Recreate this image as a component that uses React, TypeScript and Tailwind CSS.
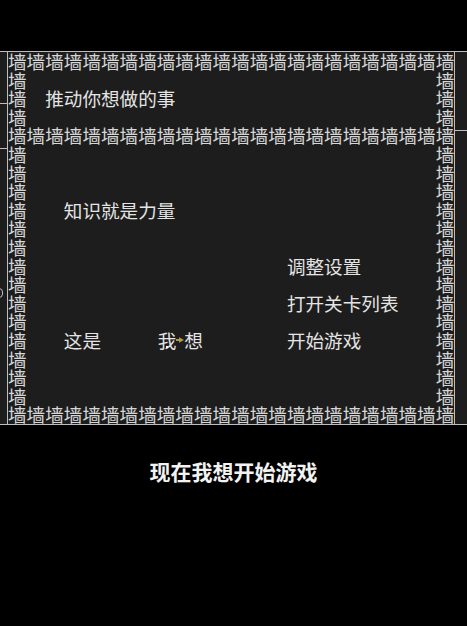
const COLS = 24;
const ROWS = 20;

const labels: Record<string, string> = {
  "2-2": "推动你想做的事",
  "8-3": "知识就是力量",
  "11-15": "调整设置",
  "13-15": "打开关卡列表",
  "15-15": "开始游戏",
  "15-3": "这是",
};

const isWall = (r: number, c: number) =>
  r === 0 || r === 4 || r === ROWS - 1 || c === 0 || c === COLS - 1;

const PushArrow = () => (
  <svg width="8" height="8" viewBox="0 0 8 8" className="block shrink-0">
    <line x1="0" y1="4" x2="4" y2="4" stroke="#d0d0d0" strokeWidth="1.4" />
    <path d="M3 1.2 L8 4 L3 6.8 Z" fill="#c09a30" />
  </svg>
);

const Cell = ({ r, c }: { r: number; c: number }) => {
  if (isWall(r, c)) {
    return <div className="text-center text-[#d6d6d6]">墙</div>;
  }
  const text = labels[`${r}-${c}`];
  if (text) {
    return <div className="whitespace-nowrap text-[#e4e4e4]">{text}</div>;
  }
  if (r === 15 && c === 8) {
    return (
      <div className="relative flex items-center whitespace-nowrap text-[#e4e4e4]">
        <span className="ml-[1px] shrink-0">我</span>
        <PushArrow />
        <span className="shrink-0">想</span>
        <span className="absolute left-[9px] top-[15px] h-[2px] w-[2px] bg-white" />
      </div>
    );
  }
  return <div />;
};

export default function App() {
  const cells = [];
  for (let r = 0; r < ROWS; r++) {
    for (let c = 0; c < COLS; c++) {
      cells.push(<Cell key={`${r}-${c}`} r={r} c={c} />);
    }
  }

  return (
    <div
      className="flex h-[626px] w-[467px] flex-col overflow-hidden bg-black"
      style={{ fontFamily: '"Noto Sans CJK SC", "Noto Sans", sans-serif' }}
    >
      <div className="h-[51px] shrink-0" />

      {/* game board */}
      <div className="flex shrink-0 border-y border-[#bdbdbd] bg-[#1d1d1d]">
        <div className="relative w-[7px] shrink-0">
          <span className="absolute left-0 top-[51px] h-px w-[7px] bg-[#bdbdbd]" />
          <span className="absolute left-0 top-[96px] h-px w-[7px] bg-[#bdbdbd]" />
          <span className="absolute left-[-5px] top-[236px] h-[10px] w-[8px] rounded-full border border-[#bdbdbd]" />
        </div>
        <div className="grid grid-cols-[repeat(24,18.6px)] grid-rows-[repeat(20,18.6px)] border-x border-[#bdbdbd] text-[18.6px] leading-[18.6px]">
          {cells}
        </div>
        <div className="relative flex-1">
          <span className="absolute left-0 top-[78px] h-px w-full bg-[#bdbdbd]" />
        </div>
      </div>

      <div className="flex justify-center pt-[32px] text-[21px] font-semibold leading-[28px] text-[#f2f2f2]">
        现在我想开始游戏
      </div>
    </div>
  );
}
